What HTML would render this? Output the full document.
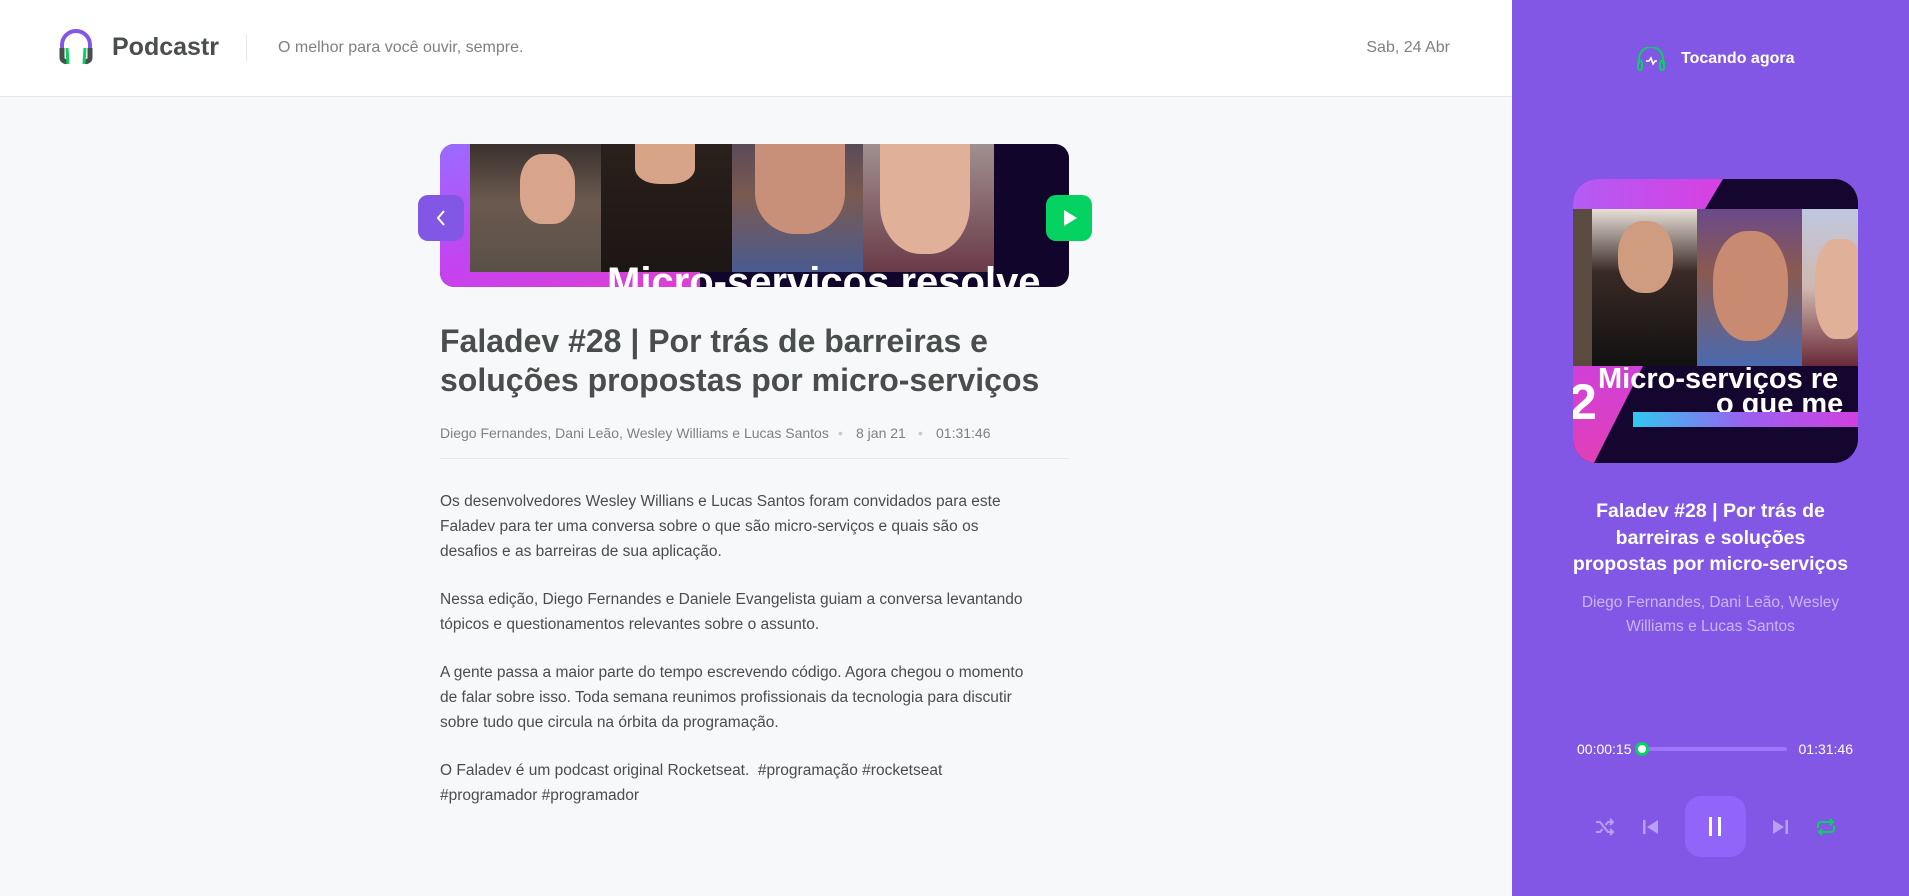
<!DOCTYPE html>
<html><head><meta charset="utf-8">
<style>
*{margin:0;padding:0;box-sizing:border-box}
body{width:1909px;height:896px;overflow:hidden;background:#f7f8fa;font-family:"Liberation Sans",Arial,sans-serif;position:relative}
.abs{position:absolute}
header{position:absolute;left:0;top:0;width:1512px;height:97px;background:#fff;border-bottom:1px solid #e6e8eb}
.side{position:absolute;left:1512px;top:0;width:397px;height:896px;background:#8257e5}
.ctl{position:absolute;top:816px}
</style></head><body>
<header>
  <svg class="abs" style="left:58px;top:28px" width="36" height="38" viewBox="0 0 36 38">
    <path d="M4 24 V17 A14 14 0 0 1 32 17 V24" fill="none" stroke="#8257e5" stroke-width="4"/>
    <path d="M4 20 V30 A4 4 0 0 0 10 33" fill="none" stroke="#494d4b" stroke-width="5"/>
    <path d="M32 20 V30 A4 4 0 0 1 26 33" fill="none" stroke="#494d4b" stroke-width="5"/>
    <path d="M9 20 L10 36" stroke="#04d361" stroke-width="3"/>
    <path d="M27 20 L26 36" stroke="#04d361" stroke-width="3"/>
  </svg>
  <div class="abs" style="left:112px;top:33px;font-size:25px;font-weight:bold;color:#494d4b">Podcastr</div>
  <div class="abs" style="left:246px;top:34px;width:1px;height:27px;background:#e6e8eb"></div>
  <div class="abs" style="left:278px;top:39px;font-size:16px;color:#808080">O melhor para você ouvir, sempre.</div>
  <div class="abs" style="left:1366px;top:39px;width:84px;text-align:right;font-size:16px;color:#808080">Sab, 24 Abr</div>
</header>

<div class="abs" style="left:440px;top:144px;width:629px;height:143px;border-radius:14px;overflow:hidden;background:#12052c">
  <div class="abs" style="left:0;top:0;width:260px;height:143px;background:linear-gradient(160deg,#9a6cff 0%,#c542f0 55%,#e03fd0 100%)"></div>
  <div class="abs" style="left:30px;top:0;width:131px;height:128px;background:linear-gradient(180deg,#3a302c 0%,#6b5a50 45%,#5a5048 100%)"></div>
  <div class="abs" style="left:80px;top:10px;width:55px;height:70px;border-radius:40%;background:#d9a48c"></div>
  <div class="abs" style="left:161px;top:0;width:131px;height:128px;background:linear-gradient(180deg,#2a201c 0%,#1c1614 100%)"></div>
  <div class="abs" style="left:195px;top:0;width:60px;height:40px;border-radius:0 0 40% 40%;background:#d8a488"></div>
  <div class="abs" style="left:292px;top:0;width:131px;height:128px;background:linear-gradient(180deg,#5a4a58 0%,#7a5a50 40%,#4a5a90 100%)"></div>
  <div class="abs" style="left:315px;top:0;width:90px;height:90px;border-radius:0 0 45% 45%;background:#c89078"></div>
  <div class="abs" style="left:423px;top:0;width:131px;height:128px;background:linear-gradient(180deg,#a09090 0%,#6a3a48 100%)"></div>
  <div class="abs" style="left:440px;top:0;width:90px;height:110px;border-radius:0 0 45% 45%;background:#e0b098"></div>
  <div class="abs" style="left:167px;top:116px;font-size:40px;font-weight:bold;color:#fff;white-space:nowrap">Micro-serviços resolve</div>
</div>
<div class="abs" style="left:418px;top:195px;width:46px;height:46px;border-radius:10px;background:#8257e5"><svg width="46" height="46"><path d="M26 16 L20 23 L26 30" fill="none" stroke="#fff" stroke-width="2"/></svg></div>
<div class="abs" style="left:1046px;top:195px;width:46px;height:46px;border-radius:10px;background:#04d361"><svg width="46" height="46"><path d="M18 15 L31 23 L18 31 Z" fill="#fff"/></svg></div>

<div class="abs" style="left:440px;top:322px;font-size:32px;line-height:39px;font-weight:bold;color:#494d4b;white-space:nowrap">Faladev #28 | Por trás de barreiras e<br>soluções propostas por micro-serviços</div>
<div class="abs" style="left:440px;top:425px;font-size:14px;color:#808080;white-space:nowrap">Diego Fernandes, Dani Leão, Wesley Williams e Lucas Santos</div>
<div class="abs" style="left:838px;top:425px;font-size:14px;color:#c8c8c8">•</div>
<div class="abs" style="left:856px;top:425px;font-size:14px;color:#808080">8 jan 21</div>
<div class="abs" style="left:918px;top:425px;font-size:14px;color:#c8c8c8">•</div>
<div class="abs" style="left:936px;top:425px;font-size:14px;color:#808080">01:31:46</div>
<div class="abs" style="left:440px;top:458px;width:629px;height:1px;background:#e6e8eb"></div>

<div class="abs" style="left:440px;top:489px;width:640px;font-size:15.5px;line-height:25px;color:#494d4b;white-space:nowrap">
<p>Os desenvolvedores Wesley Willians e Lucas Santos foram convidados para este<br>Faladev para ter uma conversa sobre o que são micro-serviços e quais são os<br>desafios e as barreiras de sua aplicação.</p>
<p style="margin-top:23px">Nessa edição, Diego Fernandes e Daniele Evangelista guiam a conversa levantando<br>tópicos e questionamentos relevantes sobre o assunto.</p>
<p style="margin-top:23px">A gente passa a maior parte do tempo escrevendo código. Agora chegou o momento<br>de falar sobre isso. Toda semana reunimos profissionais da tecnologia para discutir<br>sobre tudo que circula na órbita da programação.</p>
<p style="margin-top:23px">O Faladev é um podcast original Rocketseat.&nbsp; #programação #rocketseat<br>#programador #programador</p>
</div>

<div class="side">
  <svg class="abs" style="left:125px;top:47px" width="28" height="24" viewBox="0 0 28 24">
    <path d="M2 17 V12 A12 12 0 0 1 26 12 V17" fill="none" stroke="#04d361" stroke-width="2"/>
    <rect x="1" y="14" width="4" height="9" rx="2" fill="none" stroke="#04d361" stroke-width="2"/>
    <rect x="23" y="14" width="4" height="9" rx="2" fill="none" stroke="#04d361" stroke-width="2"/>
    <path d="M9 14 L12 14 L14 11 L16 17 L18 14 L20 14" fill="none" stroke="#fff" stroke-width="1.6"/>
  </svg>
  <div class="abs" style="left:169px;top:50px;font-size:16px;font-weight:bold;color:#fff">Tocando agora</div>

  <div class="abs" style="left:61px;top:179px;width:285px;height:284px;border-radius:24px;overflow:hidden;background:#14062e">
    <div class="abs" style="left:0;top:0;width:150px;height:30px;background:linear-gradient(90deg,#b35cf5,#d83fe0);clip-path:polygon(0 0,100% 0,88% 100%,0 100%)"></div>
    <div class="abs" style="left:0;top:187px;width:70px;height:97px;background:linear-gradient(180deg,#d040d8,#e040b8);clip-path:polygon(0 0,100% 0,30% 100%,0 100%)"></div>
    <div class="abs" style="left:0;top:30px;width:19px;height:157px;background:#5a4a40"></div>
    <div class="abs" style="left:19px;top:30px;width:105px;height:157px;background:linear-gradient(180deg,#e8e0d8 0%,#3a2a26 40%,#111 100%)"></div>
    <div class="abs" style="left:45px;top:42px;width:55px;height:72px;border-radius:45%;background:#d09c80"></div>
    <div class="abs" style="left:124px;top:30px;width:105px;height:157px;background:linear-gradient(180deg,#6a4a8a 0%,#8a5a50 40%,#4a6ab0 100%)"></div>
    <div class="abs" style="left:140px;top:52px;width:75px;height:110px;border-radius:45%;background:#c88a70"></div>
    <div class="abs" style="left:229px;top:30px;width:56px;height:157px;background:linear-gradient(180deg,#c0c8e0 0%,#d0b8b0 50%,#6a2a38 100%)"></div>
    <div class="abs" style="left:242px;top:60px;width:50px;height:100px;border-radius:40%;background:#e0b098"></div>
    <div class="abs" style="left:25px;top:184px;font-size:29px;font-weight:bold;color:#fff;white-space:nowrap">Micro-serviços re</div>
    <div class="abs" style="left:143px;top:209px;font-size:29px;font-weight:bold;color:#fff;white-space:nowrap">o que me</div>
    <div class="abs" style="left:-4px;top:194px;font-size:50px;font-weight:bold;color:#fff">2</div>
    <div class="abs" style="left:60px;top:233px;width:225px;height:15px;background:linear-gradient(90deg,#30c8f0,#9a60f0 50%,#d040e0)"></div>
  </div>

  <div class="abs" style="left:0;top:498px;width:397px;text-align:center;font-size:19.5px;line-height:26.5px;font-weight:bold;color:#fff">Faladev #28 | Por trás de<br>barreiras e soluções<br>propostas por micro-serviços</div>
  <div class="abs" style="left:0;top:591px;width:397px;text-align:center;font-size:15.5px;line-height:24px;color:#c9b5f5">Diego Fernandes, Dani Leão, Wesley<br>Williams e Lucas Santos</div>

  <div class="abs" style="left:65px;top:741px;font-size:14px;color:#fff">00:00:15</div>
  <div class="abs" style="left:130px;top:747px;width:145px;height:4px;border-radius:2px;background:#9f75ff"></div>
  <div class="abs" style="left:123px;top:742px;width:14px;height:14px;border-radius:50%;background:#fff;border:3px solid #04d361"></div>
  <div class="abs" style="left:276px;top:741px;width:65px;text-align:right;font-size:14px;color:#fff">01:31:46</div>

  <svg class="ctl" style="left:82px" width="22" height="22" viewBox="0 0 22 22"><g fill="none" stroke="#b89ff5" stroke-width="2"><path d="M2 6 H6 L14 16 H19"/><path d="M2 16 H6 L8.5 13"/><path d="M11.5 9 L14 6 H19"/><path d="M16 3 L19 6 L16 9"/><path d="M16 13 L19 16 L16 19"/></g></svg>
  <svg class="ctl" style="left:128px" width="22" height="22" viewBox="0 0 22 22"><rect x="3" y="4" width="2.5" height="14" fill="#b89ff5"/><path d="M18 4 V18 L7 11 Z" fill="#b89ff5"/></svg>
  <div class="abs" style="left:173px;top:796px;width:61px;height:61px;border-radius:16px;background:#9164fa">
    <div class="abs" style="left:24px;top:21px;width:3px;height:19px;background:#fff"></div>
    <div class="abs" style="left:33px;top:21px;width:3px;height:19px;background:#fff"></div>
  </div>
  <svg class="ctl" style="left:257px" width="22" height="22" viewBox="0 0 22 22"><path d="M4 4 V18 L15 11 Z" fill="#b89ff5"/><rect x="16.5" y="4" width="2.5" height="14" fill="#b89ff5"/></svg>
  <svg class="ctl" style="left:303px" width="22" height="22" viewBox="0 0 22 22"><g fill="none" stroke="#04d361" stroke-width="2"><path d="M3 12 V9 A3 3 0 0 1 6 6 H18"/><path d="M15 3 L18 6 L15 9"/><path d="M19 10 V13 A3 3 0 0 1 16 16 H4"/><path d="M7 13 L4 16 L7 19"/></g></svg>
</div>
</body></html>
